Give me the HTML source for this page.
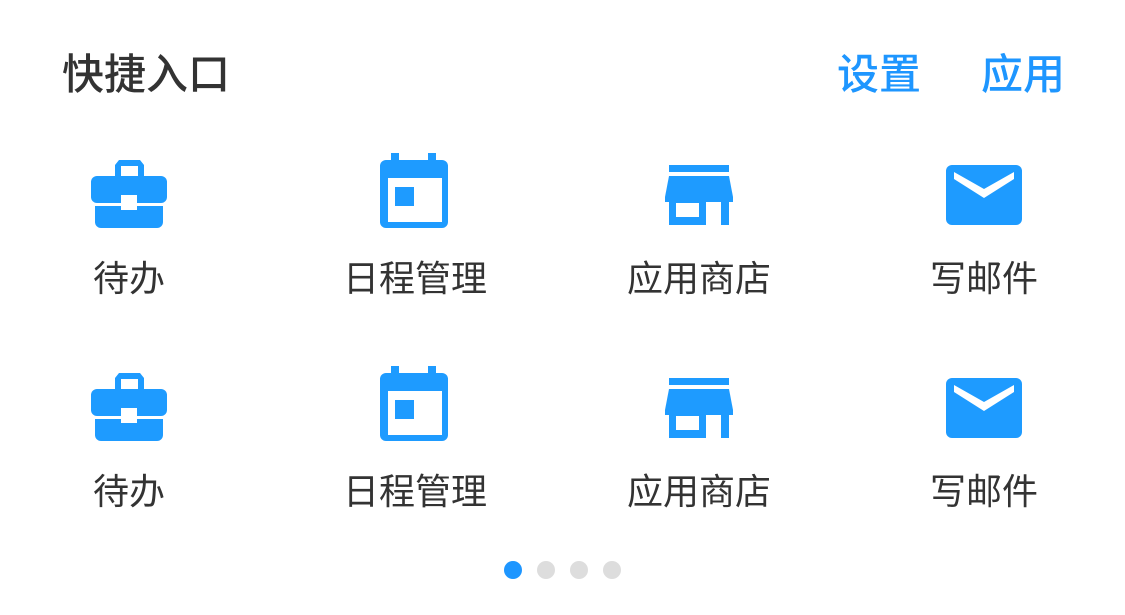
<!DOCTYPE html><html><head><meta charset="utf-8"><style>
body{margin:0;width:1125px;height:615px;background:#fff;position:relative;overflow:hidden;font-family:"Liberation Sans","Noto Sans CJK SC",sans-serif}
.t{position:absolute;white-space:nowrap;line-height:1}
.l{position:absolute;font-size:36px;color:#333;transform:translateX(-50%);white-space:nowrap;line-height:1}
.d{position:absolute;top:561px;width:18px;height:18px;border-radius:50%;background:#ddd}
</style></head><body>
<div class="t" style="left:62px;top:54px;font-size:42px;color:#333;font-weight:500">快捷入口</div>
<div class="t" style="left:837px;top:54px;font-size:42px;color:#1e96ff;font-weight:500">设置</div>
<div class="t" style="left:981px;top:54px;font-size:42px;color:#1e96ff;font-weight:500">应用</div>
<svg width="1125" height="615" style="position:absolute;left:0;top:0">
<defs><g id="r" fill="#1e9bff">
<path d="M115 177v-12l4-5h21l4 5v12h-6v-11h-17v11z"/>
<rect x="91" y="176" width="76" height="27" rx="6"/>
<path d="M95 206h68v16a6 6 0 0 1-6 6h-56a6 6 0 0 1-6-6z"/>
<rect x="121" y="195" width="16" height="15" fill="#fff"/>
<rect x="380" y="160" width="68" height="68" rx="6"/>
<rect x="391" y="153" width="8" height="10"/><rect x="428" y="153" width="8" height="10"/>
<rect x="388" y="178" width="54" height="44" fill="#fff"/>
<rect x="395" y="187" width="19" height="19"/>
<rect x="669" y="165" width="60" height="7"/>
<path d="M669 176h60l4 21v5h-68v-5z"/>
<rect x="669" y="202" width="60" height="23"/>
<rect x="676" y="203" width="23" height="14" fill="#fff"/>
<rect x="706" y="202" width="15" height="23" fill="#fff"/>
<rect x="946" y="165" width="76" height="60" rx="6"/>
<path d="M954 172l30 17l30-17v7l-30 19l-30-19z" fill="#fff"/>
</g></defs>
<use href="#r"/><use href="#r" y="213"/>
</svg>
<div class="l" style="left:129px;top:261px">待办</div>
<div class="l" style="left:415px;top:261px">日程管理</div>
<div class="l" style="left:699px;top:261px">应用商店</div>
<div class="l" style="left:984px;top:261px">写邮件</div>
<div class="l" style="left:129px;top:474px">待办</div>
<div class="l" style="left:415px;top:474px">日程管理</div>
<div class="l" style="left:699px;top:474px">应用商店</div>
<div class="l" style="left:984px;top:474px">写邮件</div>
<div class="d" style="left:504px;background:#1e96ff"></div>
<div class="d" style="left:537px"></div>
<div class="d" style="left:570px"></div>
<div class="d" style="left:603px"></div>
</body></html>
